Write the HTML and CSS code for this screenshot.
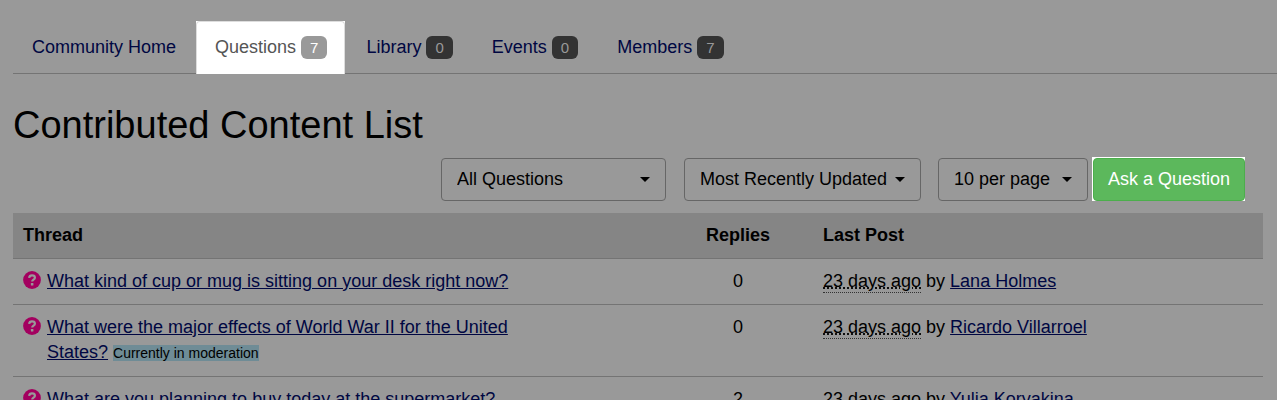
FILE: index.html
```html
<!DOCTYPE html>
<html lang="en">
<head>
<meta charset="utf-8">
<title>Contributed Content List</title>
<link rel="stylesheet" href="styles.css">
</head>
<body>
<svg class="defs" aria-hidden="true">
  <symbol id="question" viewBox="0 0 18 18">
    <circle cx="9" cy="9" r="8.9" fill="#a3005f"/>
    <path d="M6.1 6.9C6.3 5.2 7.4 4.4 9 4.4c1.700 0 2.900.9 2.900 2.300 0 2-2.700 2-2.700 3.900" fill="none" stroke="#999" stroke-width="2.200"/>
    <rect x="7.900" y="12" width="2.500" height="2.400" rx=".5" fill="#999"/>
  </symbol>
  <symbol id="caret" viewBox="0 0 10 5"><path d="M0 0h10L5 5z" fill="#000"/></symbol>
</svg>
<nav class="tabs">
  <a class="tab" href="#">Community Home</a>
  <a class="tab active" href="#"><span class="tab-face">Questions <span class="badge">7</span></span></a>
  <a class="tab" href="#">Library <span class="badge">0</span></a>
  <a class="tab" href="#">Events <span class="badge">0</span></a>
  <a class="tab" href="#">Members <span class="badge">7</span></a>
</nav>
<main class="content">
  <h1>Contributed Content List</h1>
  <form class="toolbar">
    <div class="picker filter">
      <select aria-label="Filter"><option>All Questions</option><option>Unanswered</option></select>
      <svg class="caret" aria-hidden="true"><use href="#caret"/></svg>
    </div>
    <div class="picker sort">
      <select aria-label="Sort order"><option>Most Recently Updated</option><option>Newest</option></select>
      <svg class="caret" aria-hidden="true"><use href="#caret"/></svg>
    </div>
    <div class="picker count">
      <select aria-label="Page size"><option>10 per page</option><option>20 per page</option></select>
      <svg class="caret" aria-hidden="true"><use href="#caret"/></svg>
    </div>
    <div class="spotlight"><button class="ask" type="button">Ask a Question</button></div>
  </form>
  <table class="threads">
    <thead>
      <tr><th class="col-thread">Thread</th><th class="col-replies">Replies</th><th class="col-last">Last Post</th></tr>
    </thead>
    <tbody>
      <tr>
        <td><div class="thread"><svg class="icon" aria-hidden="true"><use href="#question"/></svg><div class="title"><a href="#">What kind of cup or mug is sitting on your desk right now?</a></div></div></td>
        <td class="col-replies">0</td>
        <td><abbr title="23 days ago">23 days ago</abbr> by <a href="#">Lana Holmes</a></td>
      </tr>
      <tr>
        <td><div class="thread"><svg class="icon" aria-hidden="true"><use href="#question"/></svg><div class="title"><a href="#">What were the major effects of World War II for the United States?</a> <span class="status">Currently in moderation</span></div></div></td>
        <td class="col-replies">0</td>
        <td><abbr title="23 days ago">23 days ago</abbr> by <a href="#">Ricardo Villarroel</a></td>
      </tr>
      <tr>
        <td><div class="thread"><svg class="icon" aria-hidden="true"><use href="#question"/></svg><div class="title"><a href="#">What are you planning to buy today at the supermarket?</a></div></div></td>
        <td class="col-replies">2</td>
        <td><abbr title="23 days ago">23 days ago</abbr> by <a href="#">Yulia Koryakina</a></td>
      </tr>
    </tbody>
  </table>
</main>
</body>
</html>
```
FILE: styles.css
```css
* { box-sizing: border-box; }
html { background: #999; overflow: hidden; }
body {
  margin: 0;
  padding-top: 21px;
  background: #999;
  color: #000;
  font: 18px/25px "Liberation Sans", Arial, sans-serif;
}
a { color: #000742; }
.defs { display: none; }

.tabs {
  display: flex;
  gap: 2px;
  margin-left: 13px;
  box-shadow: inset 0 -1px #747474;
}
.tab {
  padding: 14px 18px 14px 19px;
  text-decoration: none;
}
.tab.active {
  padding: 0;
  background: #fff;
  color: #555;
}
.tab-face {
  display: block;
  padding: 13px 17px 14px 18px;
  border: 1px solid #ddd;
  border-bottom: 0;
  border-radius: 4px 4px 0 0;
}
.badge {
  display: inline-block;
  padding: 0 9px;
  border-radius: 6px;
  background: #333;
  color: #999;
  font-size: 15px;
  line-height: 23px;
}
.active .badge { background: #999; color: #fff; }

.content { padding: 0 14px 0 13px; }
h1 {
  margin: 30px 0 11px;
  font-size: 38px;
  font-weight: 400;
  line-height: 42px;
}

.toolbar {
  display: flex;
  justify-content: flex-end;
  margin: 0 18px 12px 0;
}
.picker { position: relative; margin-right: 18px; padding-top: 1px; }
.filter { width: 225px; }
.sort { width: 237px; margin-right: 17px; }
.count { width: 150px; margin-right: 4px; }
.picker select {
  appearance: none;
  width: 100%;
  height: 43px;
  padding: 0 15px;
  border: 1px solid #666;
  border-radius: 4px;
  background: #999;
  color: #000;
  font: inherit;
}
.caret {
  position: absolute;
  top: 20px;
  right: 16px;
  width: 10px;
  height: 5px;
  pointer-events: none;
}
.spotlight { padding: 1px 0 0 1px; background: #fff; }
.ask {
  display: block;
  height: 43px;
  padding: 0 14px;
  border: 1px solid #4cae4c;
  border-radius: 4px;
  background: #5cb85c;
  color: #fff;
  font: inherit;
}

.threads {
  width: 100%;
  table-layout: fixed;
  border-collapse: separate;
  border-spacing: 0;
}
.threads th, .threads td {
  padding: 10px;
  border-bottom: 1px solid #747474;
  text-align: left;
  vertical-align: top;
}
.threads th { background: #858585; }
.col-thread { width: 52%; }
.col-replies { width: 12%; }
.threads .col-replies { text-align: center; }
.thread { display: flex; gap: 6px; }
.icon { flex: none; width: 18px; height: 18px; margin-top: 2px; }
.title { max-width: 480px; }
.status {
  background: #6f8c96;
  font-size: 14px;
}
abbr {
  padding-bottom: 1px;
  border-bottom: 1px dotted #333;
  text-decoration: underline dotted;
}
```
